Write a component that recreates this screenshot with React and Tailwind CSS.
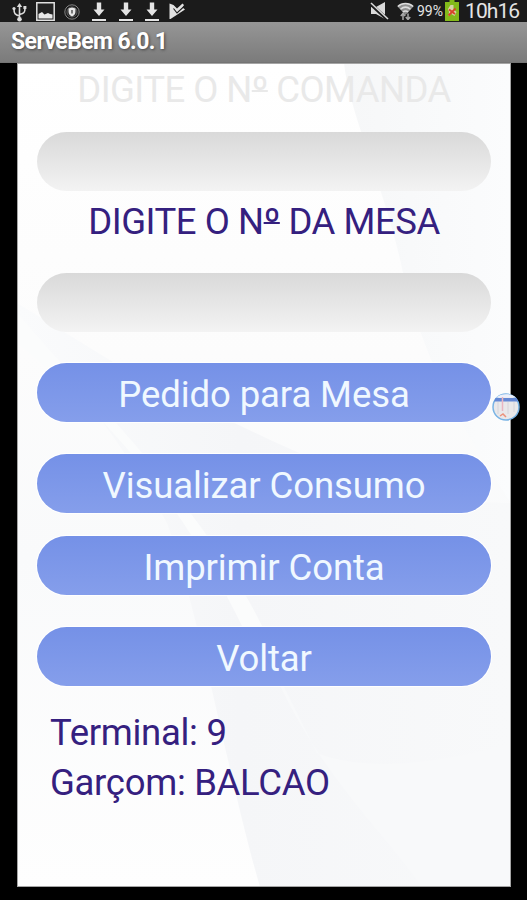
import React, {useState} from 'react';

function DownloadIcon() {
    return (
        <svg width="14" height="20" viewBox="0 0 14 20" fill="#e4e4e4">
            <path d="M4.800 1.500h4.400V8.500h3.300L7 15 1.500 8.500h3.300z"/>
            <path d="M0 18h14v2H0z"/>
        </svg>
    );
}

function StatusBar() {
    return (
        <div className="flex h-[22px] justify-between bg-[#1b1b1b] pl-3 pr-[9px] text-[#e4e4e4]">
            <div className="flex items-start">
                {/* USB */}
                <svg width="15" height="19" viewBox="0 0 15 19" className="mt-[3px]" fill="none" stroke="#dcdcdc" strokeWidth="1.600">
                    <path d="M7.500 3v12M7.500 13C3 12 2 10.500 2 6M7.500 11.500C12 10.500 13 9.500 13 5"/>
                    <path d="M7.500 0l2.700 4H4.800z" fill="#dcdcdc" stroke="none"/>
                    <circle cx="7.500" cy="16.200" r="2.300" fill="#dcdcdc" stroke="none"/>
                    <circle cx="2" cy="5.500" r="1.600" fill="#dcdcdc" stroke="none"/>
                    <path d="M11.400 3h3v3h-3z" fill="#dcdcdc" stroke="none"/>
                </svg>
                {/* capture d'écran */}
                <svg width="19" height="19" viewBox="0 0 19 19" className="ml-[9px] mt-[2px]">
                    <path d="M.8.8h17.400v17.400H.8z" fill="#222" stroke="#e0e0e0" strokeWidth="1.500"/>
                    <path d="M2.500 16.500V12l3.500-2 2.500 2.500L12 11l2 1 2.500.5v4z" fill="#e8e8e8"/>
                </svg>
                {/* bouclier */}
                <svg width="16" height="16" viewBox="0 0 16 16" className="ml-[9px] mt-1" fill="none">
                    <circle cx="8" cy="8" r="7.200" stroke="#858585" strokeWidth="1"/>
                    <circle cx="8" cy="8" r="5" stroke="#606060" strokeWidth="1"/>
                    <path d="M8 3.500l3.500 1v3.500c0 2-1.500 3.500-3.500 4.500C6 11.500 4.500 10 4.500 8V4.500z" fill="#e8e8e8"/>
                    <path d="M7.400 6h1.200v3.500H7.400z" fill="#333"/>
                </svg>
                <div className="ml-3 mt-px flex gap-[12.500px]">
                    <DownloadIcon/>
                    <DownloadIcon/>
                    <DownloadIcon/>
                </div>
                {/* play avec coche */}
                <svg width="17" height="17" viewBox="0 0 17 17" className="ml-[10px] mt-[3px]">
                    <path d="M.5.500L4.500 2 8 5.500 13.500.5 15 2 13.500 4.500 16 6.500 1.500 16H.5z" fill="#e2e2e2"/>
                    <path d="M4.500 5.500l3.500 4.500 7-6.500" fill="none" stroke="#1b1b1b" strokeWidth="1.100"/>
                </svg>
            </div>
            <div className="flex items-start">
                {/* son coupé */}
                <svg width="19" height="18" viewBox="0 0 19 18" className="mt-[2px]">
                    <path d="M1 5h5l9-5v17l-9-5H1z" fill="#dadada"/>
                    <path d="M0 1.500L17 17" stroke="#1b1b1b" strokeWidth="3.500"/>
                    <path d="M1 1l17 16" stroke="#dadada" strokeWidth="1.600"/>
                </svg>
                {/* wifi */}
                <svg width="17" height="18" viewBox="0 0 17 18" className="ml-[8px] mt-[2px]" fill="none">
                    <path d="M.5 4.500C5 0 12 0 16.500 4.500L8.500 13z" fill="#8f8f8f"/>
                    <path d="M.8 4.500C5 .5 12 .5 16.200 4.500M3.500 7.300c3-2.600 7-2.600 10 0M5.800 10c1.600-1.300 3.800-1.300 5.400 0" stroke="#dcdcdc" strokeWidth="1.500"/>
                    <path d="M6 18v-6M3.800 14L6 11.500 8.200 14M11 11.500v6M8.800 15l2.200 2.500 2.200-2.500" stroke="#a8a8a8" strokeWidth="1.500"/>
                </svg>
                <span className="ml-[3px] mt-[3px] w-[27px] whitespace-nowrap font-['Roboto'] text-[14px] leading-4">99%</span>
                {/* batterie */}
                <svg width="14" height="21" viewBox="0 0 14 21" className="ml-px">
                    <path d="M4.500 0h5v2H14v19H0V2h4.500z" fill="#83b91a"/>
                    <path d="M5.500 5h3v4l3 3-2 4-3-2-3 2 .5-4-1-3z" fill="#d9d3a8"/>
                    <path d="M3.500 15.500l7-7M4 9.500l6 4.500" stroke="#d8452a" strokeWidth="1.900"/>
                </svg>
                <span className="ml-[6px] w-[53px] whitespace-nowrap font-['Roboto'] text-[21px] leading-[23px] tracking-[-0.900px]">10h16</span>
            </div>
        </div>
    );
}

// vagues grises très claires derrière le formulaire
function Waves() {
    return (
        <svg className="absolute inset-0" width="494" height="824" viewBox="0 0 494 824">
            <defs>
                <linearGradient id="base" x1="0" y1="0" x2="0" y2="1">
                    <stop offset="0" stopColor="#ffffff"/>
                    <stop offset="0.350" stopColor="#fcfcfc"/>
                    <stop offset="0.600" stopColor="#f9fafb"/>
                    <stop offset="1" stopColor="#fefefe"/>
                </linearGradient>
                <linearGradient id="side" x1="0" y1="0" x2="1" y2="0">
                    <stop offset="0" stopColor="#f6f7f8"/>
                    <stop offset="1" stopColor="#fbfcfd"/>
                </linearGradient>
                <linearGradient id="low" x1="0" y1="0" x2="1" y2="0">
                    <stop offset="0" stopColor="#fafbfc"/>
                    <stop offset="0.450" stopColor="#f5f6f8"/>
                    <stop offset="1" stopColor="#f8f9fa"/>
                </linearGradient>
            </defs>
            <path d="M0 0h494v824H0z" fill="url(#base)"/>
            <path d="M327 0C332 50 370 130 386 210C405 290 440 360 494 440V0z" fill="url(#side)"/>
            <path d="M0 278C60 310 110 390 150 460C185 560 210 710 243 824H494V440C350 440 250 370 130 320L0 240z" fill="url(#low)"/>
            <path d="M35 290C110 370 200 470 245 563L225 563C170 450 100 360 0 280V250z" fill="#fbfcfc"/>
            <path d="M245 580C290 700 360 760 405 824H494V680C430 700 350 710 300 690z" fill="#f8f9fa"/>
        </svg>
    );
}

// "Nº" avec l'indicateur ordinal souligné
function Numero() {
    return (
        <>N<span className="underline decoration-2 underline-offset-[-12px] [text-decoration-skip-ink:none]">º</span></>
    );
}

function PillButton({children, className, onClick}) {
    return (
        <button
            type="button"
            onClick={onClick}
            className={`h-[59px] w-full rounded-full bg-linear-to-b from-[#7591e7] to-[#859eeb] pt-[5px] text-center tracking-[-0.100px] text-[#f0f8ff] ring-1 ring-white ${className}`}
        >
            {children}
        </button>
    );
}

function App() {
    const [comanda, setComanda] = useState('');
    const [mesa, setMesa] = useState('');

    return (
        <div className="h-[900px] w-[527px] overflow-hidden bg-black font-['Roboto',sans-serif]">
            <StatusBar/>
            <header className="h-[41px] border-b border-[#747474] bg-linear-to-b from-[#969696] to-[#7b7b7b] pl-[11px] text-[23px] font-bold leading-[40px] text-white [text-shadow:1px_1px_3px_#444]">
                <span className="tracking-[-0.600px]">ServeBem 6.0.1</span>
            </header>
            <main className="relative ml-[17px] h-[824px] w-[494px] bg-white">
                <Waves/>
                <form className="relative flex h-full flex-col border border-[#a5a5a5] px-[19px] text-[36.500px] leading-[44px]">
                    <label htmlFor="comanda" className="mt-[4px] whitespace-nowrap text-center tracking-[-0.550px] text-[#e9e9e9]">DIGITE O <Numero/> COMANDA</label>
                    <input
                        id="comanda"
                        disabled
                        value={comanda}
                        onChange={(e) => setComanda(e.target.value)}
                        className="mt-5 h-[59px] w-full rounded-full bg-linear-to-b from-[#d9d9d9] to-[#f3f3f3] px-6"
                    />
                    <label htmlFor="mesa" className="mt-[9px] whitespace-nowrap text-center tracking-[-0.450px] text-[#35207f]">DIGITE O <Numero/> DA MESA</label>
                    <input
                        id="mesa"
                        value={mesa}
                        onChange={(e) => setMesa(e.target.value)}
                        className="mt-[29px] h-[59px] w-full rounded-full bg-linear-to-b from-[#d9d9d9] to-[#f3f3f3] px-6 text-[#35207f] outline-none"
                    />
                    <PillButton className="mt-[31px]">Pedido para Mesa</PillButton>
                    <PillButton className="mt-8">Visualizar Consumo</PillButton>
                    <PillButton className="mt-[23px]">Imprimir Conta</PillButton>
                    <PillButton className="mt-8">Voltar</PillButton>
                    <div className="mt-[22px] pl-[13px] leading-[50px] tracking-[-0.300px] text-[#35207f]">
                        <p>Terminal: 9</p>
                        <p>Garçom: BALCAO</p>
                    </div>
                </form>
                {/* bulle flottante au bord de l'écran */}
                <svg className="absolute left-[474px] top-[329px]" width="30" height="30" viewBox="0 0 30 30">
                    <circle cx="15" cy="15" r="13" fill="#e9e8ea" stroke="#79b4e5" strokeWidth="1.500"/>
                    <path d="M5 5.500C10 1 20 1 25 5.500z" fill="#edf0fb"/>
                    <path d="M4.500 6h21l1.500 3.500H3z" fill="#6488d5"/>
                    <path d="M7 10v12M17 10v12M23 10v10" stroke="#d6d4da"/>
                    <path d="M11.500 5v14" stroke="#e9b5c1" strokeWidth="1.500"/>
                    <path d="M9 24l3-2 3 3" stroke="#ec927b" strokeWidth="1.500" fill="none"/>
                </svg>
            </main>
        </div>
    );
}

export default App;
